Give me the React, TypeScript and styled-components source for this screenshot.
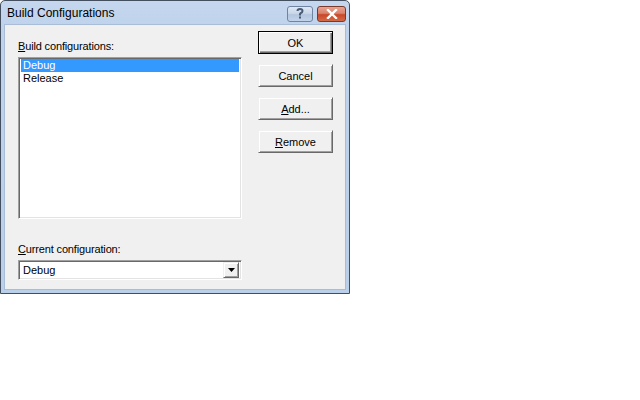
import React from "react";
import styled, { createGlobalStyle } from "styled-components";

const Global = createGlobalStyle`
  html, body { margin: 0; padding: 0; background: #ffffff; }
  body { font-family: "Liberation Sans", Arial, sans-serif; font-size: 11px; color: #000; }
`;

const Window = styled.div`
  width: 350px;
  height: 294px;
  box-sizing: border-box;
  border: 1px solid #434f5e;
  border-radius: 5px 5px 0 0;
  background: linear-gradient(#c5d7ee 0px, #bfd3ec 24px, #b9cfea 100%);
  padding: 0 3px 3px;
  display: flex;
  flex-direction: column;
`;

const TitleBar = styled.div`
  height: 23px;
  display: flex;
  align-items: center;
  padding-left: 3px;
  gap: 4px;
`;

const Title = styled.div`
  flex: 1;
  font-size: 12px;
  color: #000;
  padding-top: 1px;
`;

const CaptionButton = styled.div<{ $close?: boolean }>`
  width: ${(p) => (p.$close ? 29 : 26)}px;
  height: 16px;
  box-sizing: border-box;
  border: 1px solid ${(p) => (p.$close ? "#7a3a2a" : "#6f84a0")};
  border-radius: 3px;
  background: ${(p) =>
    p.$close
      ? "linear-gradient(#e8a493 0%, #d9826c 45%, #c8482a 55%, #d36a47 100%)"
      : "linear-gradient(#dfe8f4 0%, #c9d7ea 45%, #b3c6df 55%, #c2d4ea 100%)"};
  display: flex;
  align-items: center;
  justify-content: center;
  margin-top: 2px;
  svg { display: block; }
`;

const Client = styled.div`
  flex: 1;
  background: #f0f0f0;
  border: 1px solid #a9bed6;
  display: flex;
  padding: 6px 0 0 13px;
  gap: 16px;
`;

const LeftColumn = styled.div`
  width: 224px;
  flex-shrink: 0;
  display: flex;
  flex-direction: column;
  padding-top: 9px;
`;

const Label = styled.div`
  height: 13px;
  line-height: 13px;
  margin-bottom: 4px;
  white-space: nowrap;
  letter-spacing: -0.15px;
  u { text-decoration: underline; text-underline-offset: 1px; }
`;

const ListBox = styled.div`
  height: 162px;
  box-sizing: border-box;
  background: #fff;
  border-top: 1px solid #a0a0a0;
  border-left: 1px solid #a0a0a0;
  border-bottom: 1px solid #ffffff;
  border-right: 1px solid #ffffff;
  box-shadow: inset 1px 1px 0 #696969, inset -1px -1px 0 #e3e3e3;
  padding: 1px 2px;
  margin-bottom: 24px;
`;

const ListItem = styled.div<{ $selected?: boolean }>`
  height: 13px;
  line-height: 13px;
  padding-left: 2px;
  background: ${(p) => (p.$selected ? "#3399ff" : "transparent")};
  color: ${(p) => (p.$selected ? "#fff" : "#000")};
`;

const Combo = styled.div`
  height: 20px;
  box-sizing: border-box;
  background: #fff;
  border-top: 1px solid #a0a0a0;
  border-left: 1px solid #a0a0a0;
  border-bottom: 1px solid #ffffff;
  border-right: 1px solid #ffffff;
  box-shadow: inset 1px 1px 0 #696969, inset -1px -1px 0 #e3e3e3;
  display: flex;
  align-items: center;
  padding: 2px 2px 2px 4px;
`;

const ComboText = styled.div`
  flex: 1;
  line-height: 14px;
`;

const ComboButton = styled.div`
  width: 16px;
  height: 16px;
  box-sizing: border-box;
  background: #f0f0f0;
  border-top: 1px solid #f0f0f0;
  border-left: 1px solid #f0f0f0;
  border-right: 1px solid #696969;
  border-bottom: 1px solid #696969;
  box-shadow: inset 1px 1px 0 #ffffff, inset -1px -1px 0 #a0a0a0;
  display: flex;
  align-items: center;
  justify-content: center;
`;

const RightColumn = styled.div`
  display: flex;
  flex-direction: column;
  gap: 10px;
`;

const Button = styled.div<{ $default?: boolean }>`
  width: 75px;
  height: 23px;
  box-sizing: border-box;
  background: #f0f0f0;
  display: flex;
  align-items: center;
  justify-content: center;
  border: 1px solid ${(p) => (p.$default ? "#000" : "#f0f0f0")};
  box-shadow: ${(p) =>
    p.$default
      ? "inset 1px 1px 0 #ffffff, inset -1px -1px 0 #696969, inset -2px -2px 0 #a0a0a0"
      : "inset 1px 1px 0 #ffffff, inset -1px -1px 0 #a0a0a0"};
  border-right-color: ${(p) => (p.$default ? "#000" : "#696969")};
  border-bottom-color: ${(p) => (p.$default ? "#000" : "#696969")};
  u { text-decoration: underline; text-underline-offset: 1px; }
`;

export default function App() {
  return (
    <>
      <Global />
      <Window>
        <TitleBar>
          <Title>Build Configurations</Title>
          <CaptionButton>
            <svg width="10" height="11" viewBox="0 0 10 11">
              <path d="M2.5 3 Q2.5 1 5 1 Q7.5 1 7.5 3 Q7.5 4.5 5.5 5.3 L5 6 L5 7.5" fill="none" stroke="#4a5c75" strokeWidth="2" />
              <rect x="4" y="8.5" width="2" height="2" fill="#4a5c75" />
            </svg>
          </CaptionButton>
          <CaptionButton $close>
            <svg width="12" height="10" viewBox="0 0 12 10">
              <path d="M2 1 L10 9 M10 1 L2 9" stroke="#ffffff" strokeWidth="2.4" strokeLinecap="square" />
            </svg>
          </CaptionButton>
        </TitleBar>
        <Client>
          <LeftColumn>
            <Label><u>B</u>uild configurations:</Label>
            <ListBox>
              <ListItem $selected>Debug</ListItem>
              <ListItem>Release</ListItem>
            </ListBox>
            <Label><u>C</u>urrent configuration:</Label>
            <Combo>
              <ComboText>Debug</ComboText>
              <ComboButton>
                <svg width="7" height="4" viewBox="0 0 7 4">
                  <path d="M0 0 H7 L3.5 4 Z" fill="#000" />
                </svg>
              </ComboButton>
            </Combo>
          </LeftColumn>
          <RightColumn>
            <Button $default>OK</Button>
            <Button>Cancel</Button>
            <Button><u>A</u>dd...</Button>
            <Button><u>R</u>emove</Button>
          </RightColumn>
        </Client>
      </Window>
    </>
  );
}
